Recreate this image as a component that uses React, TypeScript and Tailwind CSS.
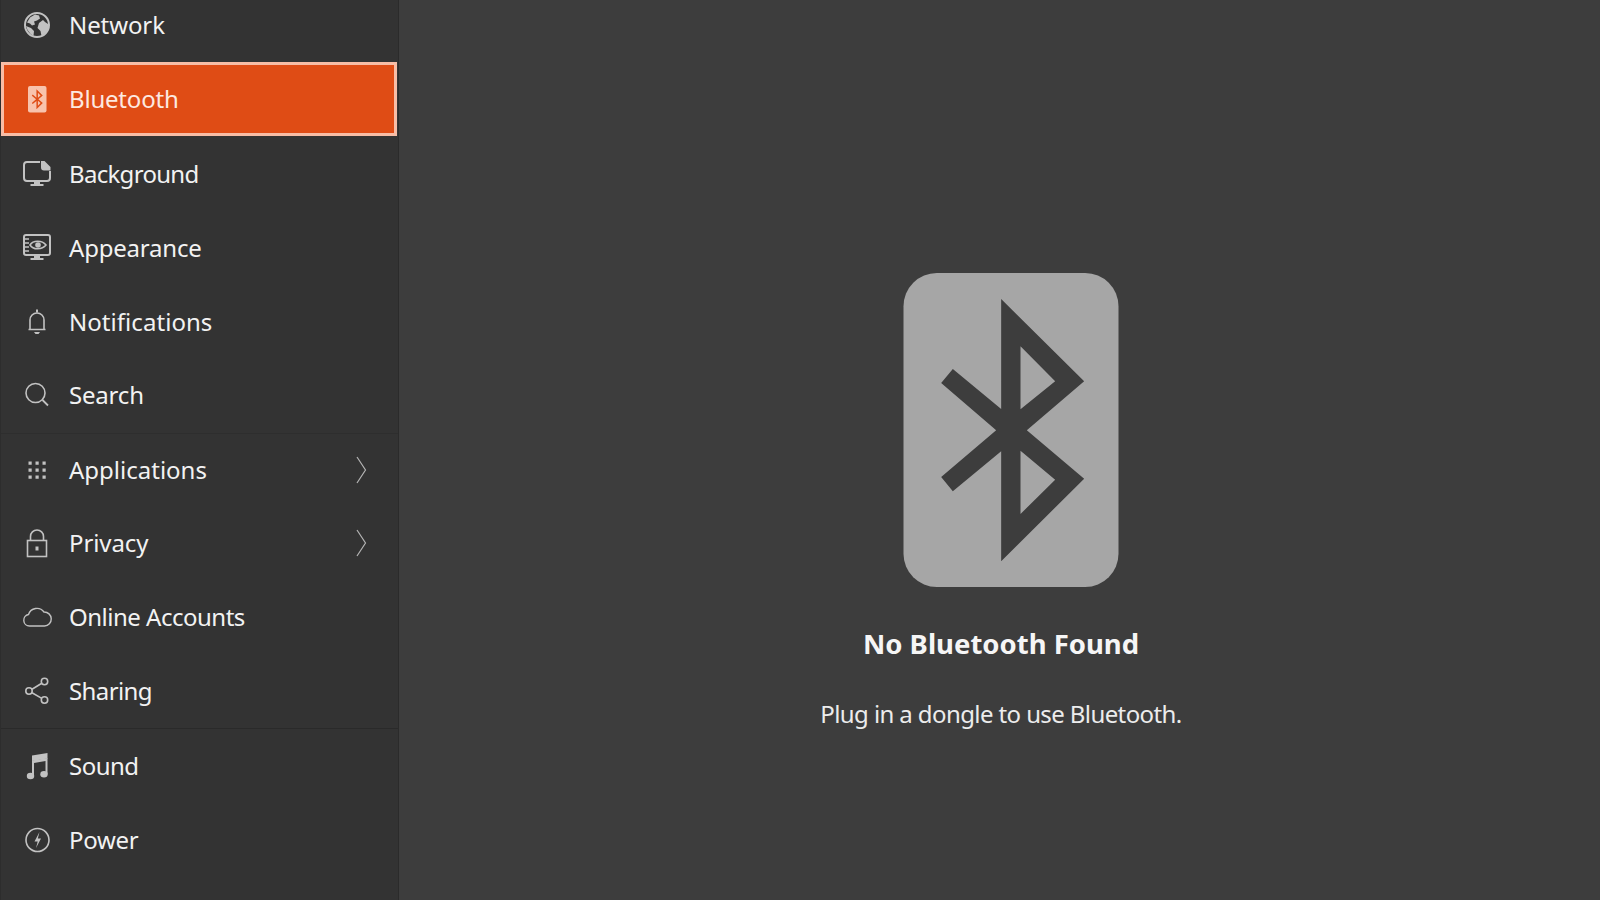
import React from "react";

const font = { fontFamily: '"Noto Sans", sans-serif' };

const BT_OUTER = "M363 118L612 365L440 512L612 657L363 905V575L218 695L183 652L348 512L183 370L218 328L363 448Z";
const BT_HOLES = "M421 260L525 365L421 449ZM421 573L525 660L421 763Z";
const C = "#c2c2c2";

function Svg({ children }: { children: React.ReactNode }) {
  return (
    <svg width="32" height="32" viewBox="0 0 32 32" fill="none" stroke={C} strokeWidth="1.6" className="shrink-0">
      {children}
    </svg>
  );
}

const icons: Record<string, React.ReactNode> = {
  network: (
    <Svg>
      <circle cx="16" cy="16" r="12" strokeWidth="2" />
      <path d="M9 8.500l5-3 4 1 1 3-3 2-3 1 1 3-3 1-2-2-3-1zM18 14l4-3 2 2 3 2 .5 5-3 4-4 3-1-5-3-3zM5 17l5 2 3 3-.5 5-3-2-3-4z" fill={C} stroke="none" />
    </Svg>
  ),
  bluetooth: (
    <svg width="32" height="32" viewBox="0 0 32 32" className="shrink-0">
      <rect x="7" y="3" width="18.500" height="26.500" rx="2" fill="#f8c3ad" />
      <svg x="10" y="6" width="12.500" height="20.500" viewBox="170 110 450 800">
        <path d={BT_OUTER + BT_HOLES} fill="#df4c15" fillRule="evenodd" />
      </svg>
    </svg>
  ),
  background: (
    <Svg>
      <path d="M19 4H6a3 3 0 0 0-3 3v13a3 3 0 0 0 3 3h20a3 3 0 0 0 3-3v-7" strokeWidth="2" />
      <path d="M20 3h3.500L29.500 9v3.500H23a3 3 0 0 1-3-3z" fill={C} stroke="none" />
      <path d="M13 23h6v3h3.500v2h-13v-2H13z" fill={C} stroke="none" />
    </Svg>
  ),
  appearance: (
    <Svg>
      <rect x="3" y="3" width="26" height="20" rx="2" strokeWidth="2" />
      <path d="M3 7h5M3 11h5M3 15h5M3 19h5" strokeWidth="1.400" />
      <path d="M9 13c3-5 12-5 16 0-4 5-13 5-16 0z" strokeWidth="1.600" />
      <circle cx="17" cy="13" r="2.800" fill={C} stroke="none" />
      <path d="M13 23h6v3h3.500v2h-13v-2H13z" fill={C} stroke="none" />
    </Svg>
  ),
  notifications: (
    <Svg>
      <path d="M9 23v-9a7 7 0 0 1 14 0v9M7.500 23.500h17" strokeWidth="1.600" />
      <path d="M15 3.500h2v3h-2zM13 26h6l-1.500 2h-3z" fill={C} stroke="none" />
    </Svg>
  ),
  search: (
    <Svg>
      <circle cx="14.500" cy="14" r="9.500" />
      <path d="M21.500 21l5.500 5.500" strokeWidth="1.800" />
    </Svg>
  ),
  applications: (
    <svg width="32" height="32" viewBox="0 0 32 32" fill={C} className="shrink-0">
      <path d="M7.500 7.500h3.200v3.200H7.500zM14.500 7.500h3.200v3.200h-3.200zM21.500 7.500h3.200v3.200h-3.200zM7.500 14.500h3.200v3.200H7.500zM14.500 14.500h3.200v3.200h-3.200zM21.500 14.500h3.200v3.200h-3.200zM7.500 21.500h3.200v3.200H7.500zM14.500 21.500h3.200v3.200h-3.200zM21.500 21.500h3.200v3.200h-3.200z" />
    </svg>
  ),
  privacy: (
    <Svg>
      <rect x="6.500" y="13.500" width="19" height="16" />
      <path d="M9.500 13.500V9.500a6.500 6.500 0 0 1 13 0v4" />
      <rect x="14.500" y="19.500" width="3" height="4" fill={C} stroke="none" />
    </Svg>
  ),
  online: (
    <Svg>
      <path d="M8.500 25a5.800 5.800 0 0 1-1-11.500A8.800 8.800 0 0 1 23 11a7 7 0 0 1 .5 14z" strokeWidth="1.400" />
    </Svg>
  ),
  sharing: (
    <Svg>
      <circle cx="8" cy="16" r="3.200" />
      <circle cx="23.500" cy="6.500" r="3.200" />
      <circle cx="23.500" cy="25" r="3.200" />
      <path d="M11 14.200l9.800-6M11 17.800l9.800 5.600" />
    </Svg>
  ),
  sound: (
    <svg width="32" height="32" viewBox="0 0 32 32" fill={C} className="shrink-0">
      <path d="M11 10.500L26.500 8V24h-2V11l-11.500 2v13h-2z" />
      <path d="M11 5.500L26.500 3v5.500L11 11z" />
      <ellipse cx="9.500" cy="26" rx="3.700" ry="3.300" />
      <ellipse cx="23" cy="24.300" rx="3.700" ry="3.300" />
    </svg>
  ),
  power: (
    <Svg>
      <circle cx="16.500" cy="16" r="11.500" strokeWidth="1.600" />
      <path d="M18.500 8l-5 9.500h3.200L15 24l5-9.500h-3.200z" fill={C} stroke="none" />
    </Svg>
  ),
};

function Chevron() {
  return (
    <svg width="12" height="28" viewBox="0 0 12 28" fill="none" stroke="#b4b4b4" strokeWidth="1.200" className="ml-auto mr-[31px] shrink-0">
      <path d="M2 1l8.500 13L2 27" />
    </svg>
  );
}

function Row({ id, label, chevron, selected, h, track }: { id: string; label: string; chevron?: boolean; selected?: boolean; h: string; track: string }) {
  return (
    <div
      className={
        selected
          ? "flex items-center pl-[17px] mr-px border-[3px] border-[#f8bda6] bg-[#df4c15] text-[#fde9e0] h-[74px]"
          : `flex items-center pl-[20px] text-[#f2f2f2] ${h}`
      }
    >
      {icons[id]}
      <span className={`ml-[16px] text-[24px] leading-none ${track}`}>{label}</span>
      {chevron && <Chevron />}
    </div>
  );
}

export default function App() {
  return (
    <div className="flex w-[1600px] h-[900px] overflow-hidden bg-[#3d3d3d]" style={font}>
      <aside className="w-[399px] h-full shrink-0 flex flex-col bg-[#333333] border-r border-[#2b2b2b] border-l border-l-[#2d2d2d] overflow-hidden">
        <div className="flex flex-col -mt-[12px]">
          <Row id="network" label="Network" h="h-[74px]" track="tracking-[-0.1px]" />
          <Row id="bluetooth" label="Bluetooth" selected h="" track="tracking-[-0.2px]" />
          <Row id="background" label="Background" h="h-[75px]" track="tracking-[-0.7px]" />
          <Row id="appearance" label="Appearance" h="h-[74px]" track="tracking-[-0.2px]" />
          <Row id="notifications" label="Notifications" h="h-[73px]" track="tracking-[0.05px]" />
          <Row id="search" label="Search" h="h-[73px]" track="tracking-[-0.2px]" />
        </div>
        <div className="h-px mt-[2px] bg-[#2e2e2e]" />
        <Row id="applications" label="Applications" chevron h="h-[72px]" track="tracking-[0px]" />
        <Row id="privacy" label="Privacy" chevron h="h-[74px]" track="tracking-[-0.1px]" />
        <Row id="online" label="Online Accounts" h="h-[74px]" track="tracking-[-0.5px]" />
        <Row id="sharing" label="Sharing" h="h-[73px]" track="tracking-[-0.6px]" />
        <div className="h-px mt-px bg-[#2a2a2a]" />
        <Row id="sound" label="Sound" h="h-[74px]" track="tracking-[-0.5px]" />
        <Row id="power" label="Power" h="h-[74px]" track="tracking-[-0.3px]" />
      </aside>
      <main className="flex-1 flex flex-col items-center pt-[273px] pl-[3px]">
        <svg width="216" height="314" viewBox="70 40 645 942" className="ml-[20px] shrink-0">
          <rect x="70" y="40" width="645" height="942" rx="100" fill="#a6a6a6" />
          <path d={BT_OUTER + BT_HOLES} fill="#3d3d3d" fillRule="evenodd" />
        </svg>
        <h1 className="mt-[39px] text-[27.5px] leading-[36px] font-bold text-[#f6f6f6]">No Bluetooth Found</h1>
        <p className="mt-[36px] text-[24px] leading-[32px] tracking-[-0.6px] text-[#ececec]">Plug in a dongle to use Bluetooth.</p>
      </main>
    </div>
  );
}
